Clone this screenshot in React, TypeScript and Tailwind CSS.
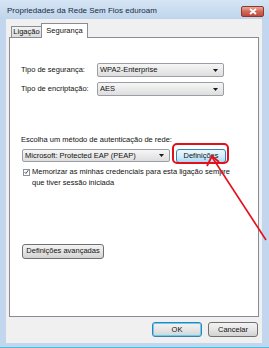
import React from "react";

function Combo({ label, w }: { label: string; w: string }) {
  return (
    <div
      className={`${w} h-[14px] flex items-center justify-between pl-[2px] pr-[5px] border border-[#9a9ea6] rounded-[2px] bg-gradient-to-b from-[#f6f6f6] to-[#dedede]`}
    >
      <span className="leading-none">{label}</span>
      <svg width="5" height="3" viewBox="0 0 5 3">
        <path d="M0 0h5L2.5 3z" fill="#1a1a1a" />
      </svg>
    </div>
  );
}

function Btn({ children, className = "" }: { children: React.ReactNode; className?: string }) {
  return (
    <div
      className={`h-[15px] flex items-center justify-center border border-[#707070] rounded-[3px] bg-gradient-to-b from-[#f3f3f3] via-[#e6e6e6] to-[#d2d2d2] leading-none ${className}`}
    >
      {children}
    </div>
  );
}

export default function App() {
  return (
    <div className="relative w-[269px] h-[348px] overflow-hidden flex flex-col bg-[#c2d6ee] font-['Liberation_Sans',Arial,sans-serif] text-[7.5px] text-[#111]">
      {/* title bar */}
      <div className="h-[19px] flex items-start justify-between pl-[7px] pr-[5px] bg-gradient-to-b from-[#d6e5f5] to-[#bfd4ec]">
        <span className="mt-[7px] text-[8px] leading-none text-[#1b2a3a]">
          Propriedades da Rede Sem Fios eduroam
        </span>
        <div className="mt-[6px] w-[23px] h-[11px] flex items-center justify-center rounded-[2px] border border-[#8a3a2c] bg-gradient-to-b from-[#e9a899] via-[#d2685a] to-[#c04a3c]">
          <svg width="8" height="7" viewBox="0 0 8 7">
            <path d="M1 1l6 5M7 1L1 6" stroke="white" strokeWidth="1.8" />
          </svg>
        </div>
      </div>

      {/* dialog body */}
      <div className="flex-1 ml-[6px] mr-[7px] flex flex-col px-[3px] bg-[#f0f0f0]">
        {/* tabs */}
        <div className="h-[18px] flex items-end pl-[2px]">
          <div className="w-[31px] h-[11px] flex items-center justify-center border border-b-0 border-[#898c95] bg-gradient-to-b from-[#f2f2f2] to-[#dcdcdc] leading-none">
            Ligação
          </div>
          <div className="relative z-10 -ml-px -mb-px w-[47px] h-[15px] flex items-start justify-center pt-[3px] border border-b-0 border-[#898c95] bg-white leading-none">
            Segurança
          </div>
        </div>

        {/* panel */}
        <div className="h-[280px] border border-[#898c95] bg-white flex flex-col pl-[11px]">
          <div className="mt-[25px] flex items-center">
            <span className="w-[76px] leading-none">Tipo de segurança:</span>
            <Combo label="WPA2-Enterprise" w="w-[127px]" />
          </div>
          <div className="mt-[5px] flex items-center">
            <span className="w-[76px] leading-none">Tipo de encriptação:</span>
            <Combo label="AES" w="w-[127px]" />
          </div>

          <div className="mt-[40px] leading-none">Escolha um método de autenticação de rede:</div>
          <div className="mt-[5px] h-[14px] flex items-center pl-[1px]">
            <Combo label="Microsoft: Protected EAP (PEAP)" w="w-[148px] !h-[13px]" />
            <div className="ml-[6px] w-[50px] h-[14px] flex items-center justify-center border border-[#3c7fb1] rounded-[3px] bg-gradient-to-b from-[#ecf7fd] via-[#d5eefc] to-[#a9daf6] leading-none">
              Definições
            </div>
          </div>

          <div className="mt-[5px] flex items-start pl-[2px]">
            <div className="mt-[1px] w-[7px] h-[7px] flex items-center justify-center border border-[#8f8f8f] bg-white shrink-0">
              <svg width="6" height="6" viewBox="0 0 6 6">
                <path d="M0.8 3.2L2.3 4.8L5.2 0.8" stroke="#2a3f7a" strokeWidth="1.1" fill="none" />
              </svg>
            </div>
            <div className="ml-[2px] leading-[11px] -mt-[2px]">
              Memorizar as minhas credenciais para esta ligação sempre
              <br />
              que tiver sessão iniciada
            </div>
          </div>

          <div className="mt-[56px] pl-[1px]">
            <Btn className="w-[82px]">Definições avançadas</Btn>
          </div>
        </div>

        {/* bottom buttons */}
        <div className="flex-1 flex justify-end items-start pt-[5px] pr-[1px] gap-[6px]">
          <div className="w-[50px] h-[15px] flex items-center justify-center border border-[#3c7fb1] rounded-[3px] shadow-[inset_0_0_0_1px_#5fd0f5] bg-gradient-to-b from-[#f3f3f3] via-[#e6e6e6] to-[#d4d4d4] leading-none">
            OK
          </div>
          <Btn className="w-[50px]">Cancelar</Btn>
        </div>
      </div>

      {/* bottom frame */}
      <div className="h-[5px] flex flex-col justify-end">
        <div className="h-px bg-[#3fc0e6]" />
      </div>

      {/* annotation: highlight ring and arrow */}
      <div className="absolute left-[172px] top-[143px] w-[57px] h-[21px] border-2 border-[#e3101c] rounded-[5px]" />
      <svg className="absolute inset-0 pointer-events-none" width="269" height="348" viewBox="0 0 269 348">
        <path d="M266 240L212 157" stroke="#e3101c" strokeWidth="1.6" fill="none" />
        <path d="M207 166L212 156L219 162" stroke="#e3101c" strokeWidth="1.8" fill="none" />
      </svg>
    </div>
  );
}
